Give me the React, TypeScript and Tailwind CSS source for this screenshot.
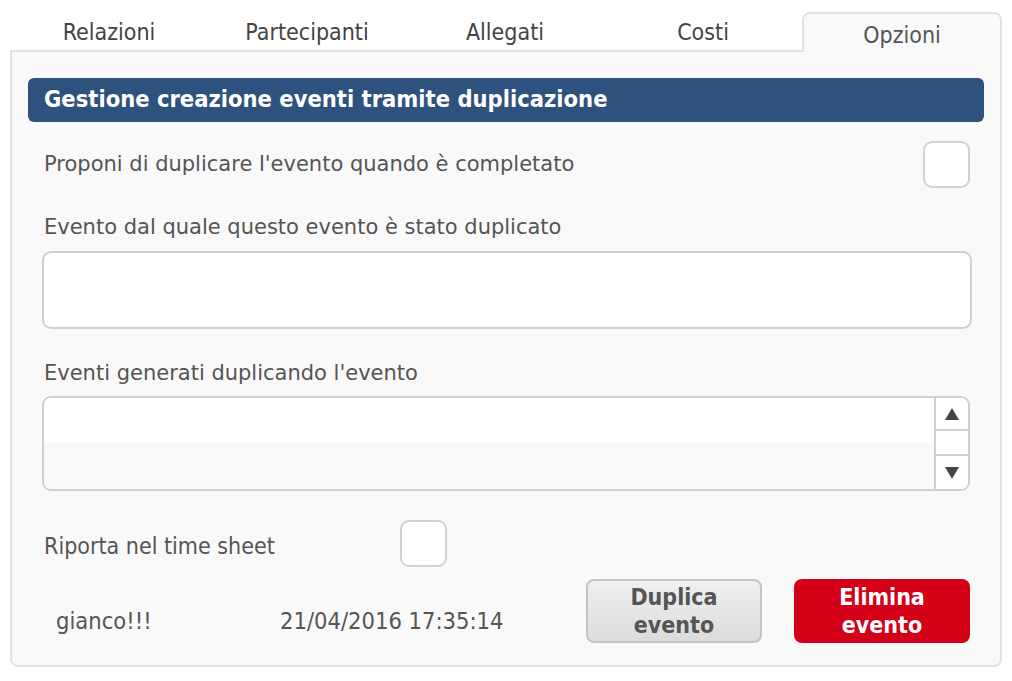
const tabs = ["Relazioni", "Partecipanti", "Allegati", "Costi"];

const cond = { fontFamily: '"DejaVu Sans Condensed", "DejaVu Sans", sans-serif' };

const Checkbox = () => (
  <div className="w-[47px] h-[47px] rounded-[9px] border-2 border-[#d2d2d2] bg-white" />
);

const App = () => {
  return (
    <div
      className="w-[1012px] h-[681px] bg-white text-[#555] pt-[12px] px-[10px]"
      style={{ fontFamily: '"DejaVu Sans", Verdana, sans-serif' }}
    >
      <div className="w-[992px]">
        <div className="flex h-[40px] items-stretch" style={cond}>
          {tabs.map((t) => (
            <div
              key={t}
              className="w-[198px] border-b-2 border-[#e2e2e2] flex items-center justify-center text-[23px] text-[#444] pt-[3px]"
            >
              {t}
            </div>
          ))}
          <div className="flex-1 bg-[#f9f9f9] border-2 border-b-0 border-[#e2e2e2] rounded-t-[8px] flex items-center justify-center text-[23px] text-[#555] pt-[5px]">
            Opzioni
          </div>
        </div>
        <div className="h-[615px] bg-[#f9f9f9] border-2 border-t-0 border-[#e2e2e2] rounded-b-[8px] px-[16px] pt-[26px]">
          <div
            className="h-[44px] rounded-[6px] bg-[#2e527d] text-white font-bold text-[23.5px] flex items-center px-[16px]"
            style={cond}
          >
            Gestione creazione eventi tramite duplicazione
          </div>
          <div className="pl-[14px] pr-[12px]">
            <div className="flex items-center justify-between mt-[18px] h-[48px] pr-[2px] pl-[2px]">
              <span className="text-[21px] pt-[2px]">Proponi di duplicare l'evento quando è completato</span>
              <Checkbox />
            </div>
            <div className="text-[21px] mt-[24px] leading-[30px] pl-[2px]">
              Evento dal quale questo evento è stato duplicato
            </div>
            <div className="mt-[9px] h-[78px] rounded-[9px] border-2 border-[#d0d0d0] bg-white" />
            <div className="text-[21px] mt-[29px] leading-[30px] pl-[2px]">Eventi generati duplicando l'evento</div>
            <div className="mt-[8px] h-[95px] rounded-[9px] border-2 border-[#d0d0d0] flex overflow-hidden mr-[2px]">
              <div className="flex-1 flex flex-col">
                <div className="h-[45px] bg-white" />
                <div className="flex-1 bg-[#f9f9f9]" />
              </div>
              <div className="w-[34px] border-l-2 border-[#d0d0d0] bg-white flex flex-col">
                <div className="h-[33px] flex items-center justify-center border-b-2 border-[#d0d0d0]">
                  <svg width="14" height="12" viewBox="0 0 14 12">
                    <path d="M7 0 L14 12 L0 12 Z" fill="#444" />
                  </svg>
                </div>
                <div className="h-[25px] border-b-2 border-[#d0d0d0]" />
                <div className="flex-1 flex items-center justify-center">
                  <svg width="14" height="12" viewBox="0 0 14 12">
                    <path d="M0 0 L14 0 L7 12 Z" fill="#444" />
                  </svg>
                </div>
              </div>
            </div>
            <div className="flex items-center mt-[28px] h-[48px] pl-[2px]">
              <span className="w-[356px] text-[23px] pt-[6px]" style={cond}>
                Riporta nel time sheet
              </span>
              <Checkbox />
            </div>
            <div className="flex items-center mt-[12px] h-[64px] pl-[2px] pr-[2px]" style={cond}>
              <span className="w-[236px] pl-[12px] text-[23.5px] pt-[22px]">gianco!!!</span>
              <span className="w-[306px] text-[23.5px] pt-[22px]">21/04/2016 17:35:14</span>
              <button
                className="w-[176px] h-[64px] rounded-[8px] border-2 border-[#c4c4c4] bg-gradient-to-b from-[#f0f0f0] to-[#dcdcdc] text-[#555] font-bold text-[23px] leading-[28px]"
                style={cond}
              >
                Duplica
                <br />
                evento
              </button>
              <button
                className="ml-[32px] w-[176px] h-[64px] rounded-[8px] bg-[#d40018] text-white font-bold text-[23px] leading-[28px]"
                style={cond}
              >
                Elimina
                <br />
                evento
              </button>
            </div>
          </div>
        </div>
      </div>
    </div>
  );
};

export default App;
